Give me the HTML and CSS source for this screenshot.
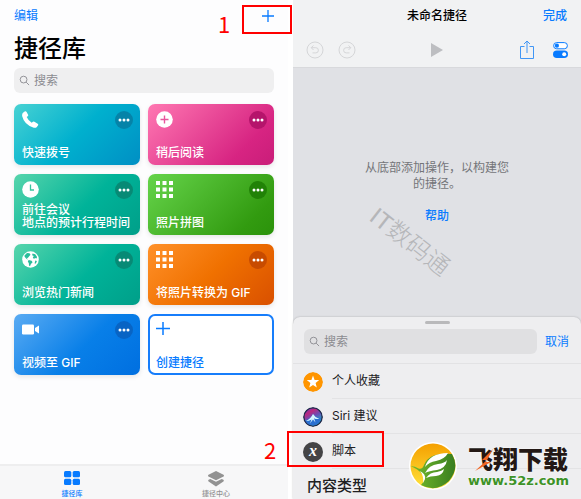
FILE: index.html
```html
<!DOCTYPE html>
<html lang="zh-CN">
<head>
<meta charset="utf-8">
<meta name="viewport" content="width=device-width, initial-scale=1">
<title>捷径库</title>
<link rel="stylesheet" href="styles.css">
</head>
<body>
<svg class="defs" aria-hidden="true">
  <symbol id="search" viewBox="0 0 12 12"><circle cx="5" cy="5" r="3.7"/><path d="M7.8 7.8 11 11"/></symbol>
  <symbol id="more" viewBox="0 0 18 18"><circle cx="5" cy="9" r="1.5"/><circle cx="9" cy="9" r="1.5"/><circle cx="13" cy="9" r="1.5"/></symbol>
  <symbol id="grid" viewBox="0 0 17 17"><path d="M0 0h4v4H0zM6.500 0h4v4h-4zM13 0h4v4h-4zM0 6.500h4v4H0zM6.500 6.500h4v4h-4zM13 6.500h4v4h-4zM0 13h4v4H0zM6.500 13h4v4h-4zM13 13h4v4h-4z"/></symbol>
</svg>
<div class="page">
  <section class="phone library">
    <header class="nav">
      <button class="link">编辑</button>
      <button class="link add" aria-label="添加"><svg width="12" height="12" viewBox="0 0 12 12"><path d="M6 0v12M0 6h12" stroke="currentColor" stroke-width="1.3"/></svg></button>
    </header>
    <h1>捷径库</h1>
    <label class="search"><svg class="glass"><use href="#search"/></svg><input type="text" placeholder="搜索" aria-label="搜索捷径"></label>
    <div class="cards">
      <article class="card cyan">
        <svg class="icon" viewBox="0 0 17 17"><path d="M1 1.800 3 .300Q4 0 4.600 1l1.500 2.700q.4.900-.4 1.500l-1 .9q1.500 3.600 5 5.700l1.200-1q.7-.6 1.500-.1l3.300 2q.9.700.4 1.500l-1.500 2q-1 .9-2.800.5Q2.300 14 .200 5.300-.2 3 1 1.800z"/></svg>
        <button class="more" aria-label="更多"><svg><use href="#more"/></svg></button>
        <h2>快速拨号</h2>
      </article>
      <article class="card pink">
        <svg class="icon" viewBox="0 0 17 17"><circle cx="8.500" cy="8.500" r="8.300"/><path d="M8.500 4.500v8M4.500 8.500h8" stroke="#e8559d" stroke-width="1.400"/></svg>
        <button class="more" aria-label="更多"><svg><use href="#more"/></svg></button>
        <h2>稍后阅读</h2>
      </article>
      <article class="card teal">
        <svg class="icon" viewBox="0 0 17 17"><circle cx="8.500" cy="8.500" r="8.300"/><path d="M8.500 3.500v5.500h3.500" fill="none" stroke="#37c59e" stroke-width="1.300"/></svg>
        <button class="more" aria-label="更多"><svg><use href="#more"/></svg></button>
        <h2>前往会议<br>地点的预计行程时间</h2>
      </article>
      <article class="card green">
        <svg class="icon"><use href="#grid"/></svg>
        <button class="more" aria-label="更多"><svg><use href="#more"/></svg></button>
        <h2>照片拼图</h2>
      </article>
      <article class="card teal">
        <svg class="icon" viewBox="0 0 17 17"><circle cx="8.500" cy="8.500" r="8.300"/><path d="M2.500 4.500 5 2l2.500.3 1 1.500L7 5.500 5.800 7 4.500 6.800 6 8.500 4.600 8 2.600 5.800zM6.600 9l3 .8 1 1.500-1.700 1.600-.9 2.300-1-.8-.2-2.300-1-1.400zM10.500 2.500l2.700.8 1.900 2.600-.6 1.700-1.500-.6-1 1-1.200-1.600 1-1.400-1.700-.7zM13.300 9.500l1.600.5-1 2.600-1.300 0z" fill="#28bd9b"/></svg>
        <button class="more" aria-label="更多"><svg><use href="#more"/></svg></button>
        <h2>浏览热门新闻</h2>
      </article>
      <article class="card orange">
        <svg class="icon"><use href="#grid"/></svg>
        <button class="more" aria-label="更多"><svg><use href="#more"/></svg></button>
        <h2>将照片转换为 GIF</h2>
      </article>
      <article class="card blue">
        <svg class="icon" viewBox="0 0 17 17"><rect y="3.500" width="12" height="10" rx="1.200"/><path d="m13 7 4-2.500v8L13 10z"/></svg>
        <button class="more" aria-label="更多"><svg><use href="#more"/></svg></button>
        <h2>视频至 GIF</h2>
      </article>
      <button class="card create">
        <svg class="icon" viewBox="0 0 17 17"><path d="M7 1v13M0 7.500h14" stroke="currentColor" stroke-width="1.500"/></svg>
        <span class="name">创建捷径</span>
      </button>
    </div>
    <nav class="tabs">
      <a class="tab active" href="#library"><svg width="16" height="14" viewBox="0 0 16 14"><rect width="7.300" height="6.300" rx="1.500"/><rect x="8.700" width="7.300" height="6.300" rx="1.500"/><rect y="7.700" width="7.300" height="6.300" rx="1.500"/><rect x="8.700" y="7.700" width="7.300" height="6.300" rx="1.500"/></svg>捷径库</a>
      <a class="tab" href="#gallery"><svg width="16" height="16" viewBox="0 0 16 16"><path d="M8 0 15.500 3.800q1 .9 0 1.700L8 9.200.5 5.500q-1-.8 0-1.700z"/><path d="m.6 8.800 1.700-.9L8 10.700l5.700-2.800 1.700.9q.9.800 0 1.600L8 15.500.6 10.400q-.9-.8 0-1.600z"/></svg>捷径中心</a>
    </nav>
  </section>

  <section class="phone editor">
    <header class="bar">
      <div class="heading"><span></span><h2>未命名捷径</h2><button class="link strong">完成</button></div>
      <div class="tools">
        <button class="tool" aria-label="撤销"><svg width="18" height="18" viewBox="0 0 18 18"><circle cx="9" cy="9" r="8"/><path d="M7.500 4.500 5.200 6.700 7.500 9M5.500 6.700h4.300a2.600 2.600 0 0 1 0 5.200H6.500"/></svg></button>
        <button class="tool" aria-label="重做"><svg width="18" height="18" viewBox="0 0 18 18"><circle cx="9" cy="9" r="8"/><path d="m10.500 4.500 2.300 2.200L10.500 9M12.500 6.700H8.200a2.600 2.600 0 0 0 0 5.200h3.300"/></svg></button>
        <button class="tool play" aria-label="运行"><svg width="12" height="14" viewBox="0 0 12 14"><path d="M0 0 12 7 0 14z"/></svg></button>
        <button class="tool share" aria-label="共享"><svg width="16" height="20" viewBox="0 0 16 20"><path d="M5.500 6.500H1.500v12h13v-12h-4M8 13V1.500M5 4l3-3 3 3"/></svg></button>
        <button class="tool settings" aria-label="设置"><svg width="15" height="16" viewBox="0 0 15 16"><rect x=".6" y=".6" width="13.800" height="6.200" rx="3.100" fill="#fff" stroke="#087bff"/><circle cx="3.900" cy="3.700" r="2.100" fill="#087bff"/><rect y="8.500" width="15" height="7.500" rx="3.750" fill="#087bff"/><circle cx="11.200" cy="12.200" r="2" fill="#fff"/></svg></button>
      </div>
    </header>
    <div class="canvas">
      <p>从底部添加操作，以构建您的捷径。</p>
      <a class="help" href="#help">帮助</a>
      <span class="watermark">IT数码通</span>
    </div>
    <div class="sheet">
      <div class="handle"></div>
      <div class="find">
        <label class="search"><svg class="glass"><use href="#search"/></svg><input type="text" placeholder="搜索" aria-label="搜索操作"></label>
        <button class="link">取消</button>
      </div>
      <ul>
        <li><svg class="badge" viewBox="0 0 20 20"><circle cx="10" cy="10" r="10" fill="#ff9500"/><path d="m10 3.600 1.600 4.300 4.600.2-3.600 2.900 1.200 4.400-3.800-2.500-3.800 2.500L7.400 11 3.800 8.100l4.600-.2z" fill="#fff"/></svg><span>个人收藏</span></li>
        <li><svg class="badge" viewBox="0 0 20 20"><defs><linearGradient id="siri" x2=".6" y2="1"><stop stop-color="#5a3cc8"/><stop offset=".3" stop-color="#bd277e"/><stop offset=".6" stop-color="#6550b8"/><stop offset="1" stop-color="#15bcc2"/></linearGradient></defs><circle cx="10" cy="10" r="10" fill="#202b4d"/><circle cx="10" cy="10" r="8.500" fill="url(#siri)"/><path d="M2 13q5 0 8-6 3 4 8 4-1 7-8 7.500Q4 18 2 13z" fill="#2a6fd0"/><path d="M10 7q2 3.500 6.500 5-3.500.4-5.500-.8l1.500 4.300L10 12.500l-3 4 1.500-4Q6 14 3 14q4.500-2 7-7z" fill="#d5f5ff"/></svg><span>Siri 建议</span></li>
        <li><span class="badge variable" aria-hidden="true">x</span><span>脚本</span></li>
      </ul>
      <h3>内容类型</h3>
    </div>
  </section>

  <span class="step one">1</span><div class="mark first"></div>
  <span class="step two">2</span><div class="mark second"></div>
  <div class="brand">
    <svg width="48" height="48" viewBox="0 0 48 48"><defs><linearGradient id="sun" x2="0" y2="1"><stop stop-color="#f5a000"/><stop offset="1" stop-color="#ffe33c"/></linearGradient><linearGradient id="leaf" x2="1"><stop stop-color="#75bd2b"/><stop offset="1" stop-color="#397e20"/></linearGradient></defs><circle cx="24" cy="24" r="24" fill="#fff"/><circle cx="24" cy="24" r="22.500" fill="url(#sun)"/><path d="M1.500 24q5 0 8 2.500Q13 28 15 23 20 10 43 12q8 14-3 27-13 12-28 4 7-7 1-11Q9 27 1.500 24z" fill="url(#leaf)"/><path d="M16 25Q20 11 39 11q-3 6-12 8-7 1-11 6zM16 31q4-8 13-9 7-1 9-4-1 8-10 10-8 1-12 3zM17 36q4-6 11-6 5-1 7-3-1 6-8 7-6 0-10 2zM14 41q1-7-3-12 6 3 5 8z" fill="#fff"/></svg>
    <div class="words"><strong>飞翔下载</strong><span>www.52z.com</span>
      <svg class="bolt" viewBox="0 0 20 24"><path d="m18 1-11 11h5L0 23l16-9h-5z" fill="#f26522"/></svg>
    </div>
  </div>
</div>
</body>
</html>
```
FILE: styles.css
```css
* { box-sizing: border-box; }
body { margin: 0; background: #fff; color: #000; font: 12px/16px Inter, "Noto Sans CJK SC", sans-serif; }
h1, h2, h3, p, ul { margin: 0; padding: 0; }
button { margin: 0; padding: 0; border: 0; background: none; font: inherit; color: inherit; }
a { text-decoration: none; color: inherit; }
svg { display: block; }
.defs { position: absolute; width: 0; height: 0; }
.page { position: relative; display: flex; gap: 5px; min-height: 100vh; overflow: hidden; }
.phone { flex: 1; min-width: 0; display: flex; flex-direction: column; }
.link { color: #087bff; }
.strong { font-weight: 500; }

.library { background: #fdfdfe; }
.nav { display: flex; justify-content: space-between; align-items: center; height: 32px; padding: 0 14px; }
h1 { padding: 0 14px; font-size: 24px; line-height: 34px; font-weight: 500; }
.search { display: flex; align-items: center; gap: 4px; height: 25px; padding: 0 5px; border-radius: 6px; background: #efeff0; }
.library .search { margin: 2px 14px 11px; }
.glass { flex: none; width: 11px; height: 11px; fill: none; stroke: #8b8b90; stroke-width: 1; }
.search input { flex: 1; min-width: 0; padding: 0; border: 0; outline: 0; background: none; font: inherit; }
.search input::placeholder { color: #8b8b90; opacity: 1; }

.cards { display: grid; grid-template-columns: 1fr 1fr; gap: 9px 8px; padding: 0 14px; }
.card { display: grid; grid-template-columns: 1fr auto; align-content: space-between; height: 61px; padding: 7px 7px 6px 8px; border-radius: 7px; color: #fff; text-align: left; box-shadow: 0 2px 5px #00000018; }
.card h2, .name { grid-column: 1 / -1; font-size: 12px; line-height: 13px; font-weight: 500; white-space: nowrap; }
.icon { width: 17px; height: 17px; fill: currentColor; }
.more { width: 18px; height: 18px; border-radius: 50%; }
.more svg { width: 18px; height: 18px; fill: #fff; }
.cyan { background: linear-gradient(135deg, #48d2d3, #00b0ce 50%, #008fc4); }
.cyan .more { background: #0583a8; }
.pink { background: linear-gradient(135deg, #ff78b2, #d72482 75%, #c91d79); }
.pink .more { background: #b5146b; }
.teal { background: linear-gradient(135deg, #57d5ac, #00b399 55%, #009f89); }
.teal .more { background: #078a75; }
.green { background: linear-gradient(135deg, #66d44b, #329b10 80%, #2b920b); }
.green .more { background: #218207; }
.orange { background: linear-gradient(135deg, #ff912a, #f07100 50%, #d95000); }
.orange .more { background: #c84b00; }
.blue { background: linear-gradient(135deg, #5aabf3, #087fe8 55%, #006fe0); }
.blue .more { background: #0864c4; }
.create { padding: 5px 6px 4px; border: 2px solid #167dfb; background: #fff; color: #087bff; box-shadow: none; }

.tabs { display: flex; margin-top: auto; height: 35px; border-top: 2px solid #eeeeef; background: #f7f7f8; }
.tab { flex: 1; display: flex; flex-direction: column; align-items: center; justify-content: space-between; padding: 5px 0 0; color: #929292; font-size: 7px; line-height: 10px; font-weight: 500; }
.tab svg { fill: currentColor; }
.active { color: #087bff; }

.editor { background: #e0e1e5; }
.bar { height: 68px; border-bottom: 1px solid #d8d9dc; background: #f1f2f3; }
.heading { display: grid; grid-template-columns: 1fr auto 1fr; align-items: center; height: 32px; padding: 0 14px; }
.heading h2 { font-size: 12px; font-weight: 500; }
.heading button { justify-self: end; }
.tools { display: flex; align-items: center; gap: 14px; height: 35px; padding: 0 13px; }
.tool { fill: none; stroke: #d5d6d8; stroke-width: 1; }
.play { margin: 0 auto 0 61px; fill: #bdbec1; stroke: none; }
.share { stroke: #4096f5; stroke-width: 1; margin-right: 4px; }
.settings { stroke: none; }
.canvas { position: relative; flex: 1; display: flex; flex-direction: column; align-items: center; gap: 16px; padding-top: 92px; color: #747579; text-align: center; }
.canvas p { width: 148px; }
.help { color: #087bff; font-weight: 500; }
.watermark { position: absolute; left: 70px; top: 162px; color: #b5b6b9; font: 24px/24px "Liberation Sans", "Noto Sans CJK SC", sans-serif; font-weight: 300; white-space: nowrap; transform: rotate(38deg); }

.sheet { border-radius: 7px 7px 0 0; background: #eeeef0; box-shadow: 0 0 2px #00000040; color: #202022; }
.handle { width: 25px; height: 3px; margin: 0 auto; border-radius: 2px; background: #b9b9bb; transform: translateY(4px); }
.find { display: flex; gap: 8px; padding: 9px 12px 9px 11px; border-bottom: 1px solid #e2e2e4; }
.find .search { flex: 1; background: #e0e0e2; }
ul { list-style: none; }
li { display: flex; align-items: center; height: 35px; padding-left: 10px; gap: 9px; }
li > span:last-child { flex: 1; line-height: 34px; border-bottom: 1px solid #e3e3e5; }
.badge { flex: none; width: 20px; height: 20px; border-radius: 50%; }
.variable { background: #444446; color: #fff; text-align: center; font: italic bold 16px/17px "Liberation Serif", serif; }
h3 { padding-left: 14px; font-size: 15px; line-height: 34px; height: 30px; font-weight: 500; }

.mark { position: absolute; border: 2px solid #f00; pointer-events: none; }
.first { left: 242px; top: 5px; width: 50px; height: 29px; }
.second { left: 287px; top: 431px; width: 97px; height: 36px; }
.step { position: absolute; color: #f00; font: 22px/22px "Noto Sans CJK SC", sans-serif; }
.one { left: 218px; top: 12px; }
.two { left: 264px; top: 438px; }
.brand { position: absolute; right: 12px; bottom: 9px; display: flex; align-items: center; gap: 11px; }
.words { position: relative; display: flex; flex-direction: column; }
.words strong { color: #231815; font: 900 25px/29px "Noto Sans CJK SC", sans-serif; text-shadow: 0 0 2px #fff; }
.words span { color: #3d9227; font: bold 13px/15px "DejaVu Sans", sans-serif; text-shadow: 0 0 2px #fff; }
.bolt { position: absolute; left: 7px; top: 4px; width: 20px; height: 24px; }
```
